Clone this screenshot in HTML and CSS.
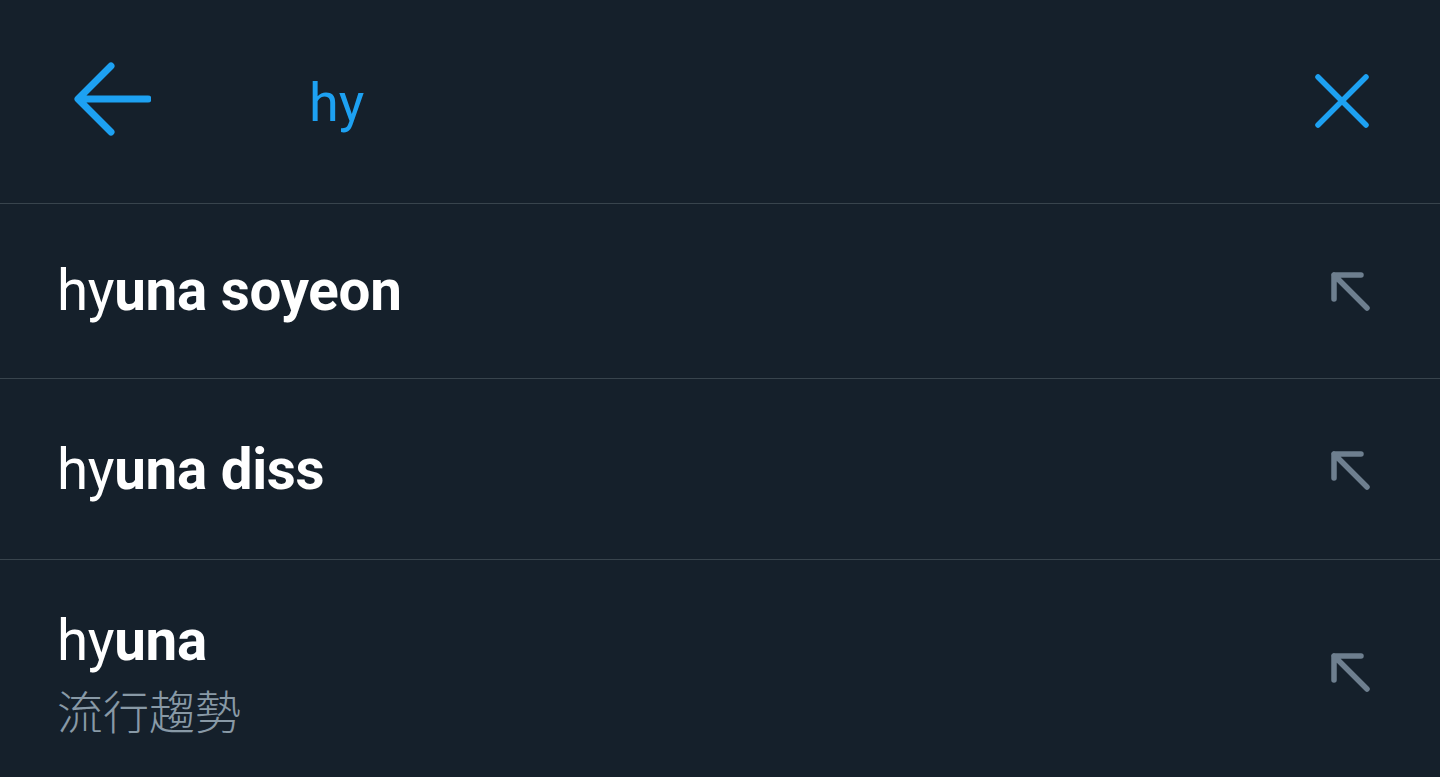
FILE: index.html
```html
<!DOCTYPE html>
<html lang="zh-Hant">
<head>
<meta charset="utf-8">
<title>Search</title>
<link rel="stylesheet" href="styles.css">
</head>
<body>
<div class="app">
  <header class="search-bar">
    <button class="icon-btn back" aria-label="Back">
      <svg width="80" height="80" viewBox="0 0 80 80"><path d="M77 38H8M40 5L7 38l33 33" fill="none" stroke="#1da1f2" stroke-width="7" stroke-linecap="round" stroke-linejoin="round"/></svg>
    </button>
    <div class="query">hy</div>
    <button class="icon-btn close" aria-label="Clear">
      <svg width="60" height="60" viewBox="0 0 60 60"><path d="M6 6l48 48M54 6L6 54" fill="none" stroke="#1da1f2" stroke-width="5.5" stroke-linecap="round"/></svg>
    </button>
  </header>
  <ul class="suggestions">
    <li class="item item-1">
      <div class="label"><span class="main">hy<b>una soyeon</b></span></div>
      <svg class="fill-arrow" width="44" height="44" viewBox="0 0 44 44"><path d="M5 29V5h27M5 5l33 33" fill="none" stroke="#6e7f8f" stroke-width="5.5" stroke-linecap="round" stroke-linejoin="round"/></svg>
    </li>
    <li class="item item-2">
      <div class="label"><span class="main">hy<b>una diss</b></span></div>
      <svg class="fill-arrow" width="44" height="44" viewBox="0 0 44 44"><path d="M5 29V5h27M5 5l33 33" fill="none" stroke="#6e7f8f" stroke-width="5.5" stroke-linecap="round" stroke-linejoin="round"/></svg>
    </li>
    <li class="item item-3">
      <div class="label"><span class="main">hy<b>una</b></span><span class="sub">流行趨勢</span></div>
      <svg class="fill-arrow" width="44" height="44" viewBox="0 0 44 44"><path d="M5 29V5h27M5 5l33 33" fill="none" stroke="#6e7f8f" stroke-width="5.5" stroke-linecap="round" stroke-linejoin="round"/></svg>
    </li>
  </ul>
</div>
</body>
</html>
```
FILE: styles.css
```css
* { box-sizing: border-box; }
html, body {
  margin: 0;
  padding: 0;
  background: #15202b;
  height: 100%;
  overflow: hidden;
}
body {
  font-family: Roboto, "Noto Sans CJK TC", sans-serif;
  color: #ffffff;
}
.app {
  width: 1440px;
  height: 777px;
}
.search-bar {
  height: 204px;
  border-bottom: 1px solid #38444d;
  display: flex;
  align-items: center;
  padding: 0 68px 2px 71px;
}
.icon-btn {
  background: none;
  border: 0;
  padding: 0;
  display: flex;
  cursor: pointer;
}
.query {
  flex: 1;
  margin-left: 158px;
  color: #1da1f2;
  font-size: 54px;
  line-height: 1;
  padding-top: 4px;
}
.suggestions {
  list-style: none;
  margin: 0;
  padding: 0;
}
.item {
  display: flex;
  align-items: center;
  justify-content: space-between;
  padding: 0 67px 0 57px;
  border-bottom: 1px solid #38444d;
}
.item-1 { height: 175px; padding-top: 2px; }
.item-2 { height: 181px; padding-top: 4px; }
.item-3 { height: 217px; border-bottom: 0; padding-top: 8px; }
.label {
  display: flex;
  flex-direction: column;
}
.main {
  font-size: 56.5px;
  line-height: 1.2;
  font-weight: 400;
  letter-spacing: -0.3px;
}
.main b { font-weight: 700; }
.sub {
  font-family: "Noto Sans CJK TC", sans-serif;
  font-size: 46px;
  font-weight: 300;
  line-height: 1.2;
  color: #8899a6;
  margin-top: 6px;
}
.fill-arrow { flex: none; }
.item-3 .fill-arrow { margin-top: 0; }
```
